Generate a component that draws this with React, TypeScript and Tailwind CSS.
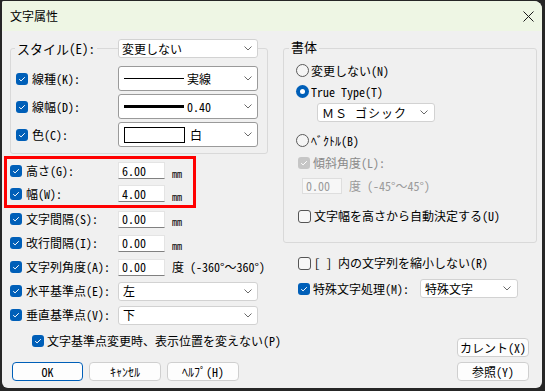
import React from "react";

function Check({ disabled = false }: { disabled?: boolean }) {
  return (
    <span
      className={
        disabled
          ? "flex h-[12px] w-[12px] shrink-0 items-center justify-center rounded-[3px] bg-[#c6c6c6]"
          : "flex h-[12px] w-[12px] shrink-0 items-center justify-center rounded-[3px] bg-[#005fb8]"
      }
    >
      <svg width="8" height="6" viewBox="0 0 8 6">
        <path d="M1.2 3.2 L3.1 4.9 L6.8 1.2" fill="none" stroke="#ffffff" strokeWidth="1" />
      </svg>
    </span>
  );
}

function Uncheck() {
  return <span className="h-[13px] w-[13px] shrink-0 rounded-[3px] border border-[#555555] bg-[#f7f7f7]" />;
}

function Radio({ on = false }: { on?: boolean }) {
  return on ? (
    <span className="flex h-[13px] w-[13px] shrink-0 items-center justify-center rounded-full bg-[#005fb8]">
      <span className="h-[5px] w-[5px] rounded-full bg-white" />
    </span>
  ) : (
    <span className="h-[13px] w-[13px] shrink-0 rounded-full border border-[#5a5a5a] bg-[#f5f5f5]" />
  );
}

function Chev() {
  return (
    <svg width="8" height="5" viewBox="0 0 8 5" className="shrink-0">
      <path d="M0.5 0.5 L4 4 L7.5 0.5" fill="none" stroke="#6a6a6a" strokeWidth="1" />
    </svg>
  );
}

function TextBox({ value, disabled = false }: { value: string; disabled?: boolean }) {
  return disabled ? (
    <div className="flex h-[16px] w-[40px] items-center border border-[#dedede] bg-[#f7f7f7] pl-[3px] text-[#9a9a9a]">
      {value}
    </div>
  ) : (
    <div className="flex h-[17px] w-[47px] items-center border border-[#e4e4e4] border-b-[#808080] bg-white pl-[3px]">
      {value}
    </div>
  );
}

function Btn({ label, primary = false }: { label: string; primary?: boolean }) {
  return (
    <div
      className={
        primary
          ? "flex h-[19px] w-[71px] items-center justify-center rounded-[4px] border-[1.5px] border-[#005fb8] bg-[#fdfdfd]"
          : "flex h-[19px] w-[72px] items-center justify-center rounded-[4px] border border-[#cfcfcf] bg-[#fdfdfd]"
      }
    >
      {label}
    </div>
  );
}

function FieldRow({ label, value, unit }: { label: string; value: string; unit: "mm" | "deg" }) {
  return (
    <div className="flex h-[24px] items-center">
      <div className="flex w-[108px] items-center gap-[4px]">
        <Check />
        <span>{label}</span>
      </div>
      <TextBox value={value} />
      {unit === "mm" ? (
        <span className="ml-[7px] mt-[6px] text-[10px]">mm</span>
      ) : (
        <span className="ml-[7px] whitespace-nowrap">度 (-360°～360°)</span>
      )}
    </div>
  );
}

export default function App() {
  return (
    <div className="h-[391px] w-[545px] bg-[#262626] pl-[2px] pt-[1px] font-['Noto_Sans_Mono_CJK_JP','Noto_Sans_CJK_JP',sans-serif] text-[12px] leading-none text-black">
      <div className="flex h-[387px] w-[540px] flex-col overflow-hidden rounded-bl-[6px] rounded-br-[6px] rounded-tl-[2px] rounded-tr-[8px] bg-[#f0f0f0]">
        {/* title bar */}
        <div className="flex h-[30px] shrink-0 items-center justify-between bg-[#eef6e4] pl-[8px] pr-[8px]">
          <span className="font-['Noto_Sans_CJK_JP',sans-serif] text-[12px]">文字属性</span>
          <svg width="11" height="11" viewBox="0 0 11 11">
            <path d="M0.5 0.5 L10.5 10.5 M10.5 0.5 L0.5 10.5" stroke="#1a1a1a" strokeWidth="1" />
          </svg>
        </div>

        {/* body */}
        <div className="flex flex-1 gap-[15px] pl-[8px] pr-[5px] pt-[8px]">
          {/* left column */}
          <div className="flex w-[258px] flex-col">
            <div className="relative z-10 flex h-[19px] items-center">
              <div className="w-[108px]">
                <span className="ml-[5px] bg-[#f0f0f0] px-[2px] text-[13px]">スタイル(E):</span>
              </div>
              <div className="flex h-[19px] w-[140px] items-center justify-between rounded-[3px] border border-[#d2d2d2] bg-white pl-[3px] pr-[5px]">
                <span>変更しない</span>
                <Chev />
              </div>
            </div>
            <div className="-mt-[10px] flex h-[106px] flex-col gap-[3px] rounded-[3px] border border-[#d9d9d9] pb-[6px] pl-[5px] pt-[17px]">
              <div className="flex h-[25px] items-center">
                <div className="flex w-[102px] items-center gap-[4px]">
                  <Check />
                  <span>線種(K):</span>
                </div>
                <div className="flex h-[25px] w-[140px] items-center rounded-[3px] border border-[#9a9a9a] bg-white pl-[5px] pr-[5px]">
                  <span className="h-[1px] w-[60px] bg-black" />
                  <span className="ml-[3px] flex-1">実線</span>
                  <Chev />
                </div>
              </div>
              <div className="flex h-[25px] items-center">
                <div className="flex w-[102px] items-center gap-[4px]">
                  <Check />
                  <span>線幅(D):</span>
                </div>
                <div className="flex h-[25px] w-[140px] items-center rounded-[3px] border border-[#9a9a9a] bg-white pl-[5px] pr-[5px]">
                  <span className="h-[3px] w-[60px] bg-black" />
                  <span className="ml-[3px] flex-1">0.40</span>
                  <Chev />
                </div>
              </div>
              <div className="flex h-[25px] items-center">
                <div className="flex w-[102px] items-center gap-[4px]">
                  <Check />
                  <span>色(C):</span>
                </div>
                <div className="flex h-[25px] w-[140px] items-center rounded-[3px] border border-[#9a9a9a] bg-white pl-[5px] pr-[5px]">
                  <span className="h-[16px] w-[61px] border border-black bg-white" />
                  <span className="ml-[5px] flex-1">白</span>
                  <Chev />
                </div>
              </div>
            </div>

            {/* red highlight */}
            <div className="-ml-[6px] mt-[2px] flex h-[52px] w-[192px] flex-col border-[3px] border-[#ff0000] pl-[3px]">
              <div className="flex h-[23px] items-center">
                <div className="flex w-[108px] items-center gap-[4px]">
                  <Check />
                  <span>高さ(G):</span>
                </div>
                <TextBox value="6.00" />
                <span className="ml-[7px] mt-[6px] text-[10px]">mm</span>
              </div>
              <div className="flex h-[23px] items-center">
                <div className="flex w-[108px] items-center gap-[4px]">
                  <Check />
                  <span>幅(W):</span>
                </div>
                <TextBox value="4.00" />
                <span className="ml-[7px] mt-[6px] text-[10px]">mm</span>
              </div>
            </div>

            <div className="-mt-[1px] flex flex-col">
              <FieldRow label="文字間隔(S):" value="0.00" unit="mm" />
              <FieldRow label="改行間隔(I):" value="0.00" unit="mm" />
              <FieldRow label="文字列角度(A):" value="0.00" unit="deg" />
              <div className="flex h-[24px] items-center">
                <div className="flex w-[108px] items-center gap-[4px]">
                  <Check />
                  <span>水平基準点(E):</span>
                </div>
                <div className="flex h-[19px] w-[140px] items-center justify-between rounded-[3px] border border-[#d2d2d2] bg-white pl-[4px] pr-[5px]">
                  <span>左</span>
                  <Chev />
                </div>
              </div>
              <div className="flex h-[24px] items-center">
                <div className="flex w-[108px] items-center gap-[4px]">
                  <Check />
                  <span>垂直基準点(V):</span>
                </div>
                <div className="flex h-[19px] w-[140px] items-center justify-between rounded-[3px] border border-[#d2d2d2] bg-white pl-[4px] pr-[5px]">
                  <span>下</span>
                  <Chev />
                </div>
              </div>
            </div>

            <div className="ml-[22px] mt-[7px] flex h-[14px] items-center gap-[3px] whitespace-nowrap">
              <Check />
              <span>文字基準点変更時、表示位置を変えない(P)</span>
            </div>

            <div className="ml-[2px] mt-[14px] flex gap-[6px]">
              <Btn label="OK" primary />
              <Btn label="ｷｬﾝｾﾙ" />
              <Btn label="ﾍﾙﾌﾟ(H)" />
            </div>
          </div>

          {/* right column */}
          <div className="flex w-[254px] flex-col">
            <div className="relative z-10 flex h-[14px] items-center">
              <span className="ml-[6px] bg-[#f0f0f0] px-[2px] text-[13px]">書体</span>
            </div>
            <div className="-mt-[5px] flex h-[195px] flex-col rounded-[3px] border border-[#d9d9d9] pl-[12px] pt-[11px]">
              <div className="flex h-[21px] items-center gap-[2px]">
                <Radio />
                <span>変更しない(N)</span>
              </div>
              <div className="flex h-[21px] items-center gap-[2px]">
                <Radio on />
                <span>True Type(T)</span>
              </div>
              <div className="ml-[21px] mt-[1px] flex h-[19px] w-[118px] items-center justify-between rounded-[3px] border border-[#d2d2d2] bg-white pl-[4px] pr-[6px]">
                <span className="tracking-[1px]">ＭＳ ゴシック</span>
                <Chev />
              </div>
              <div className="mt-[8px] flex h-[21px] items-center gap-[2px]">
                <Radio />
                <span>ﾍﾞｸﾄﾙ(B)</span>
              </div>
              <div className="ml-[2px] mt-[1px] flex h-[21px] items-center gap-[3px] text-[#8a8a8a]">
                <Check disabled />
                <span>傾斜角度(L):</span>
              </div>
              <div className="ml-[6px] mt-[5px] flex items-center gap-[7px] text-[#9a9a9a]">
                <TextBox value="0.00" disabled />
                <span>度 (-45°～45°)</span>
              </div>
              <div className="ml-[2px] mt-[15px] flex h-[14px] items-center gap-[3px]">
                <Uncheck />
                <span>文字幅を高さから自動決定する(U)</span>
              </div>
            </div>

            <div className="ml-[15px] mt-[13px] flex h-[14px] items-center gap-[3px]">
              <Uncheck />
              <span>[ ] 内の文字列を縮小しない(R)</span>
            </div>
            <div className="ml-[15px] mt-[9px] flex h-[19px] items-center">
              <div className="flex w-[122px] items-center gap-[3px]">
                <Check />
                <span>特殊文字処理(M):</span>
              </div>
              <div className="flex h-[19px] w-[98px] items-center justify-between rounded-[3px] border border-[#d2d2d2] bg-white pl-[4px] pr-[6px]">
                <span>特殊文字</span>
                <Chev />
              </div>
            </div>

            <div className="mt-[40px] flex flex-col items-end gap-[5px] pr-[8px]">
              <Btn label="カレント(X)" />
              <Btn label="参照(Y)" />
            </div>
          </div>
        </div>
      </div>
    </div>
  );
}
